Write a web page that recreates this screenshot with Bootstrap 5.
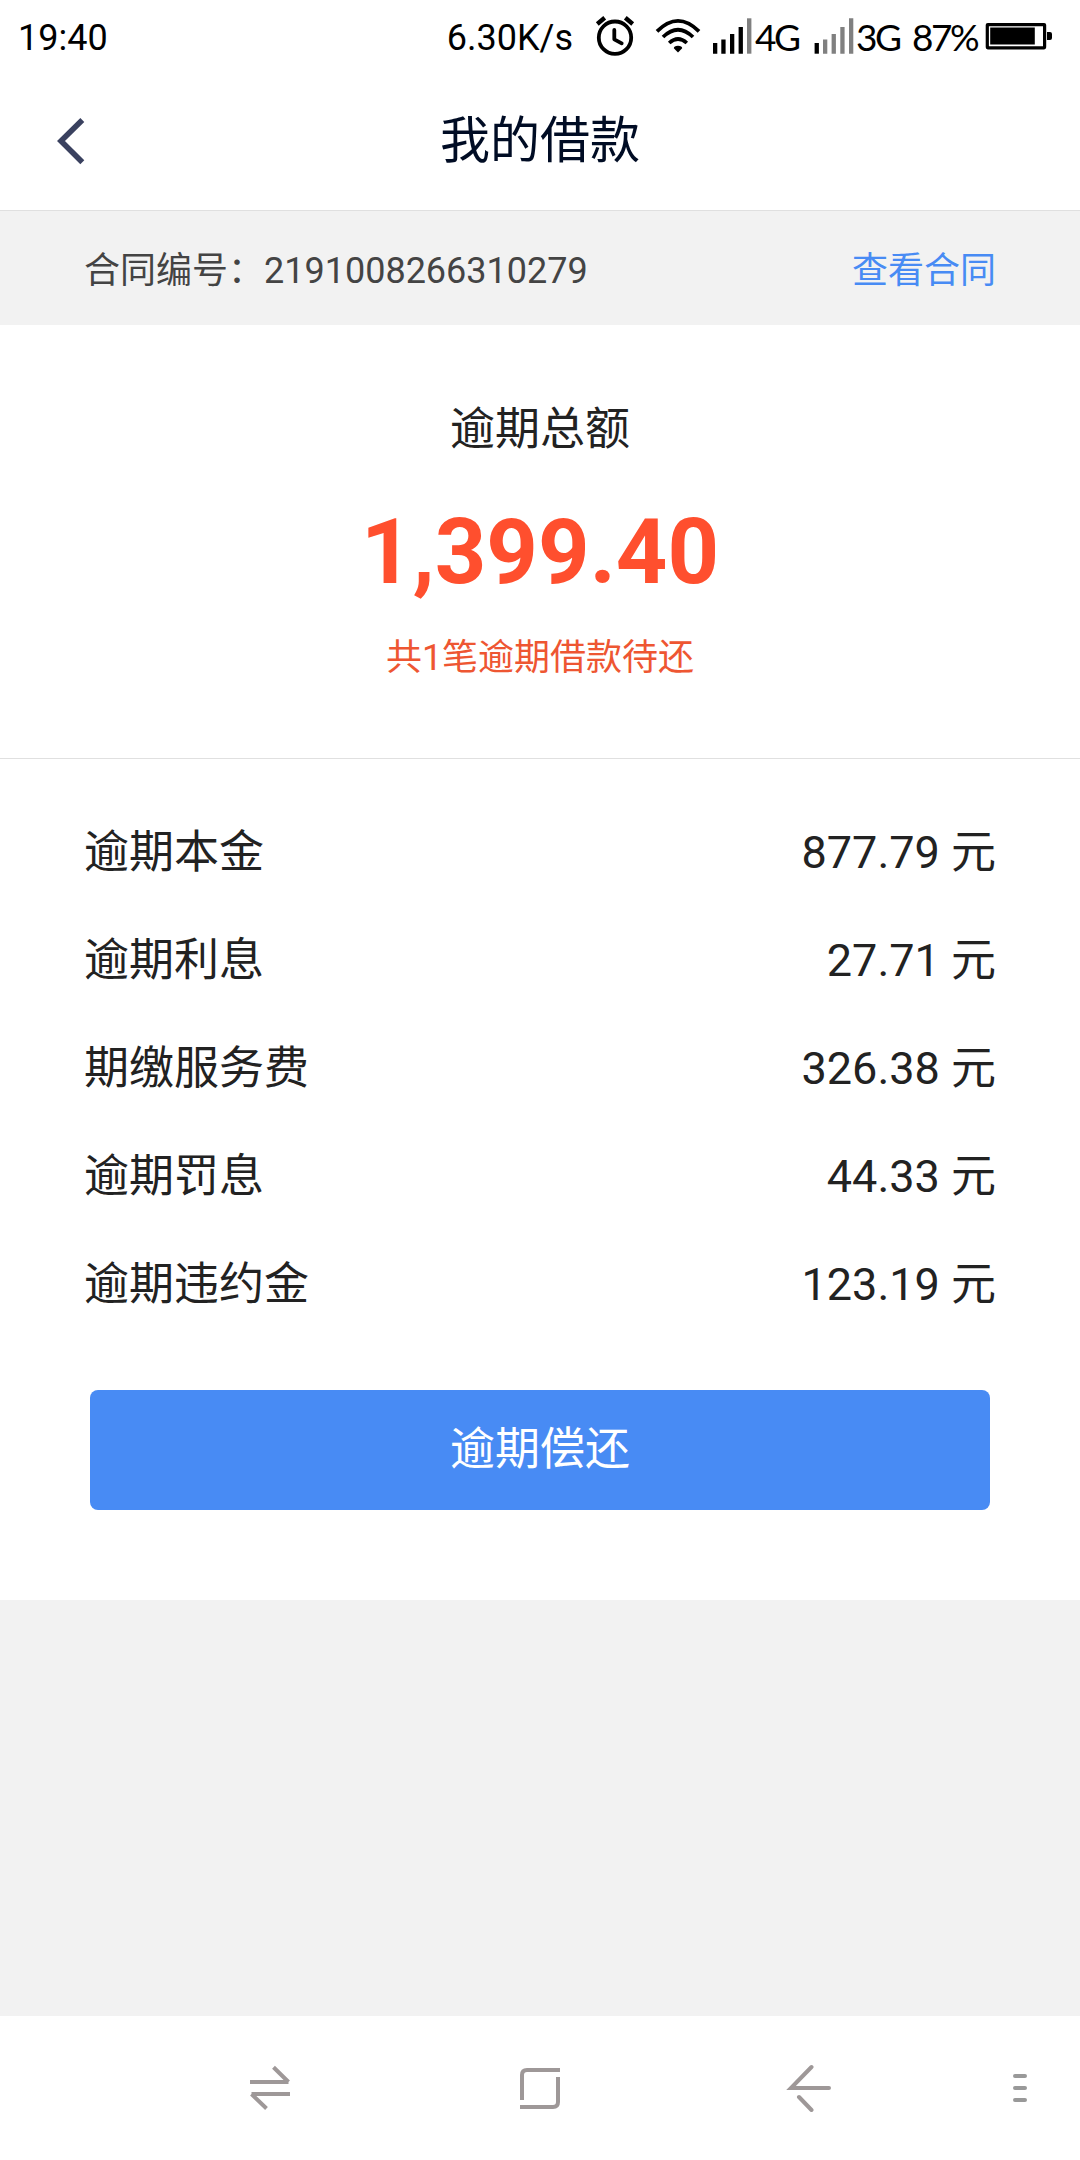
<!DOCTYPE html>
<html lang="zh-CN">
<head>
<meta charset="utf-8">
<meta name="viewport" content="width=device-width, initial-scale=1">
<title>我的借款</title>
<link rel="stylesheet" href="https://cdn.jsdelivr.net/npm/bootstrap@5.3.0/dist/css/bootstrap.min.css">
<style>
  body { font-family: Roboto, "Noto Sans CJK SC", sans-serif; color: #222; background: #f2f2f2; }
  svg { display: block; flex: none; }
  .screen { width: 1080px; height: 2160px; overflow: hidden; }
  .status-bar { height: 75px; padding: 0 27px 0 18px; font-size: 36px; line-height: 76px; color: #000; }
  .net { font-family: Lato, sans-serif; font-size: 37px; line-height: 73px; letter-spacing: -2.5px; white-space: nowrap; }
  .title-bar { height: 136px; border-bottom: 1px solid #e0e0e0; display: grid; grid-template-columns: 140px 1fr 140px; }
  .title-bar h1 { font-size: 50px; line-height: 133px; color: #000c24; }
  .back-link { padding: 42px 0 0 57px; }
  .contract { height: 114px; padding: 3px 84px 0; font-size: 36px; line-height: 114px; color: #444; }
  .contract a { color: #488bf4; }
  .summary { height: 434px; padding-top: 70px; border-bottom: 1px solid #e0e0e0; }
  .summary-name { font-size: 45px; line-height: 70px; }
  .summary-sum { font-size: 90px; line-height: 110px; margin-top: 33px; color: #ff4f2e; }
  .summary-note { font-size: 36px; line-height: 60px; margin-top: 20px; color: #ee5632; }
  .detail { height: 841px; padding: 40px 84px 0; }
  .fee { height: 108px; line-height: 108px; font-size: 45px; }
  .btn-repay { --bs-btn-bg: #488bf4; --bs-btn-color: #fff; --bs-btn-border-width: 0; --bs-btn-border-radius: 8px;
    width: 900px; height: 120px; font-size: 45px; line-height: 120px; margin: 51px 6px 0; padding: 0 0 1px; }
  .sys-nav { height: 144px; padding-left: 246px; }
</style>
<script src="https://cdn.jsdelivr.net/npm/bootstrap@5.3.0/dist/js/bootstrap.bundle.min.js"></script>
</head>
<body>
<div class="screen d-flex flex-column">
  <header class="bg-white">
    <div class="status-bar d-flex">
      <span>19:40</span>
      <span class="ms-auto">6.30K/s</span>
      <svg width="42" height="75" viewBox="594 0 42 75" style="margin-left:21px" fill="none" stroke="#000" stroke-width="3.8" stroke-linecap="round" stroke-linejoin="round">
        <circle cx="615" cy="37.7" r="16.2"/><path d="M614.3 30v9.3l7.4 4"/><path stroke-width="4.4" stroke-linecap="butt" d="M597.3 24l7.4-6.2M625.3 17.8l7.4 6.2"/>
      </svg>
      <svg width="46" height="75" viewBox="655 0 46 75" style="margin-left:19px" fill="none" stroke="#000" stroke-width="3.7">
        <path d="M657 31.4q21-21 42 0M663 37q15-14.6 30 0M669.2 43q8.8-8 17.6 0"/><path fill="#000" stroke="none" d="M673.8 48.3q0-2.6 4.2-2.6t4.2 2.6L678 52.4z"/>
      </svg>
      <svg width="42" height="75" viewBox="711 0 42 75" style="margin-left:10px">
        <path d="M713 43h4.3v10.7H713zM721.3 39.5h4.3v14.2h-4.3zM730 34h4.3v19.7H730zM738.6 27h4.3v26.7h-4.3z"/><path fill="#808080" d="M747 18.3h4.4v35.4H747z"/>
      </svg>
      <span class="net" style="width:44px;margin-left:2px">4G</span>
      <svg width="42" height="75" viewBox="812 0 42 75" style="margin-left:13px">
        <path d="M814.6 43h4.3v10.7h-4.3z"/><path fill="#808080" d="M823 39.5h4.3v14.2H823zM831.6 34h4.3v19.7h-4.3zM840.3 27h4.3v26.7h-4.3zM849 18.3h4.3v35.4H849z"/>
      </svg>
      <span class="net" style="width:44px;margin-left:2px">3G</span>
      <span class="net" style="width:66px;margin-left:12px">87%</span>
      <svg width="69" height="75" viewBox="984 0 69 75" style="margin-left:6px">
        <rect x="987.3" y="24.6" width="57.3" height="23.2" rx=".5" fill="none" stroke="#000" stroke-width="3.2"/><path d="M990.2 27.5h44.6v17h-44.6zM1047 32h3q2 0 2 2v4q0 2-2 2h-3z"/>
      </svg>
    </div>
    <div class="title-bar">
      <a class="back-link" href="#" aria-label="返回"><svg width="28" height="48" viewBox="57 117 28 48"><path d="M82.3 120L61 141l21.3 21.3" fill="none" stroke="#3a415f" stroke-width="5.6"/></svg></a>
      <h1 class="m-0 text-center fw-normal">我的借款</h1>
    </div>
  </header>

  <div class="contract d-flex justify-content-between">
    <span>合同编号：2191008266310279</span>
    <a href="#" class="text-decoration-none">查看合同</a>
  </div>

  <main class="bg-white">
    <section class="summary text-center">
      <div class="summary-name">逾期总额</div>
      <div class="summary-sum fw-bold">1,399.40</div>
      <div class="summary-note">共1笔逾期借款待还</div>
    </section>
    <section class="detail">
      <div class="fee d-flex justify-content-between"><span>逾期本金</span><span>877.79 元</span></div>
      <div class="fee d-flex justify-content-between"><span>逾期利息</span><span>27.71 元</span></div>
      <div class="fee d-flex justify-content-between"><span>期缴服务费</span><span>326.38 元</span></div>
      <div class="fee d-flex justify-content-between"><span>逾期罚息</span><span>44.33 元</span></div>
      <div class="fee d-flex justify-content-between"><span>逾期违约金</span><span>123.19 元</span></div>
      <button type="button" class="btn btn-repay">逾期偿还</button>
    </section>
  </main>

  <nav class="sys-nav bg-white d-flex align-items-center mt-auto">
    <svg width="48" height="48" viewBox="246 2064 48 48" fill="none" stroke="#9e9898" stroke-width="4"><path d="M250 2082h38.5M273.5 2067.3l15 14.7M290 2094h-38.500M266.500 2108.500l-15-14.500"/></svg>
    <svg width="48" height="48" viewBox="516 2064 48 48" style="margin-left:222px" fill="none" stroke="#9e9898" stroke-width="4"><path d="M522 2100v-25q0-5 5-5h33M558 2077v25q0 5-5 5h-33"/></svg>
    <svg width="48" height="48" viewBox="786 2064 48 48" style="margin-left:222px" fill="none" stroke="#9e9898" stroke-width="4" stroke-linecap="round"><path d="M829 2088h-38l20.500-21M799 2097l12.500 13"/></svg>
    <svg width="20" height="48" viewBox="1010 2064 20 48" style="margin-left:176px" fill="none" stroke="#999" stroke-width="4" stroke-linecap="round"><path d="M1015 2076h10M1015 2088h10M1015 2100h10"/></svg>
  </nav>
</div>
</body>
</html>
